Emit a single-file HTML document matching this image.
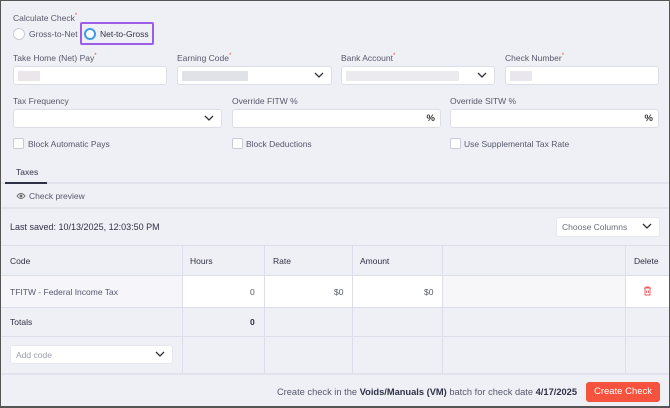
<!DOCTYPE html>
<html><head><meta charset="utf-8"><style>
*{box-sizing:border-box;margin:0;padding:0}
body{width:670px;height:408px;overflow:hidden;background:#555;font-family:"Liberation Sans",sans-serif;color:#3a3d4f;font-size:9px}
#w{position:absolute;left:1px;top:1px;width:668px;height:405px;background:#eff0f6;overflow:hidden}
.a{position:absolute}
.lbl{position:absolute;font-size:8.5px;color:#55586a;white-space:nowrap}
.req{color:#e04b4b;font-size:6px;vertical-align:top}
.in{position:absolute;background:#fff;border:1px solid #dcdde6;border-radius:3px;height:19px}
.chev{position:absolute;right:7px;top:4px;width:10px;height:8px}
.cb{position:absolute;width:11px;height:11px;border:1px solid #c9cbd6;border-radius:2px;background:#fff}
.ct{position:absolute;font-size:8.5px;color:#55586a;white-space:nowrap}
.blur{position:absolute;top:4px;height:10px}
.vl{position:absolute;width:1px;background:#dcdde8}
.hl{position:absolute;height:1px;background:#dcdde8;left:0;width:668px}
.th{position:absolute;font-size:8.5px;color:#2e3145;top:255px}
.pct{position:absolute;right:5px;top:3px;font-size:9.5px;font-weight:bold;color:#333}
</style></head><body><div id="w">
<div class="lbl" style="left:12px;top:12px">Calculate Check<span class="req">*</span></div>
<div class="a" style="left:12px;top:27px;width:12px;height:12px;border:1px solid #c9cbd6;border-radius:50%;background:#fff"></div>
<div class="ct" style="left:28px;top:28px">Gross-to-Net</div>
<div class="a" style="left:79px;top:21px;width:74px;height:23px;border:2px solid #9c5de8;border-radius:2px"></div>
<div class="a" style="left:83px;top:27px;width:12px;height:12px;border:2.5px solid #3d9be9;border-radius:50%;background:#fff"></div>
<div class="ct" style="left:99px;top:28px;color:#2e3145">Net-to-Gross</div>

<div class="lbl" style="left:12px;top:52px">Take Home (Net) Pay<span class="req">*</span></div>
<div class="lbl" style="left:176px;top:52px">Earning Code<span class="req">*</span></div>
<div class="lbl" style="left:340px;top:52px">Bank Account<span class="req">*</span></div>
<div class="lbl" style="left:504px;top:52px">Check Number<span class="req">*</span></div>
<div class="in" style="left:12px;top:65px;width:154px"><div class="blur" style="left:4px;width:22px;background:#ebe6ea"></div></div>
<div class="in" style="left:176px;top:65px;width:155px"><div class="blur" style="left:4px;width:66px;background:#e1e2e8"></div><svg class="chev" viewBox="0 0 10 8"><path d="M1 2l4 4 4-4" fill="none" stroke="#333" stroke-width="1.3"/></svg></div>
<div class="in" style="left:340px;top:65px;width:154px"><div class="blur" style="left:4px;width:113px;background:#ebebef"></div><svg class="chev" viewBox="0 0 10 8"><path d="M1 2l4 4 4-4" fill="none" stroke="#333" stroke-width="1.3"/></svg></div>
<div class="in" style="left:504px;top:65px;width:154px"><div class="blur" style="left:4px;width:22px;background:#e9e6ee"></div></div>

<div class="lbl" style="left:12px;top:95px">Tax Frequency</div>
<div class="lbl" style="left:231px;top:95px">Override FITW %</div>
<div class="lbl" style="left:449px;top:95px">Override SITW %</div>
<div class="in" style="left:12px;top:108px;width:209px"><svg class="chev" viewBox="0 0 10 8"><path d="M1 2l4 4 4-4" fill="none" stroke="#333" stroke-width="1.3"/></svg></div>
<div class="in" style="left:231px;top:108px;width:209px"><span class="pct">%</span></div>
<div class="in" style="left:449px;top:108px;width:209px"><span class="pct">%</span></div>

<div class="cb" style="left:12px;top:137px"></div><div class="ct" style="left:27px;top:138px">Block Automatic Pays</div>
<div class="cb" style="left:231px;top:137px"></div><div class="ct" style="left:245px;top:138px">Block Deductions</div>
<div class="cb" style="left:449px;top:137px"></div><div class="ct" style="left:463px;top:138px">Use Supplemental Tax Rate</div>

<div class="ct" style="left:15px;top:166px;color:#2e3145">Taxes</div>
<div class="hl" style="top:181px;height:2px;background:#e2e3ec"></div>
<div class="a" style="left:4px;top:181px;width:42px;height:2px;background:#2e3145"></div>
<svg class="a" style="left:15px;top:191px" width="10" height="8" viewBox="0 0 10 8"><path d="M1 4Q5 -1 9 4Q5 9 1 4Z" fill="none" stroke="#666" stroke-width="0.9"/><circle cx="5" cy="4" r="1.4" fill="#666"/></svg>
<div class="ct" style="left:28px;top:190px">Check preview</div>
<div class="hl" style="top:206px;height:2px;background:#e2e3ec"></div>

<div class="ct" style="left:9px;top:221px;color:#2e3145;font-size:9px">Last saved: 10/13/2025, 12:03:50 PM</div>
<div class="in" style="left:555px;top:216px;width:104px;height:20px;border-color:#e6e7ee"><span style="position:absolute;left:5px;top:4px;font-size:8.5px;color:#6a6d7e">Choose Columns</span><svg class="chev" viewBox="0 0 10 8"><path d="M1 2l4 4 4-4" fill="none" stroke="#333" stroke-width="1.3"/></svg></div>

<div class="hl" style="top:244px"></div>
<div class="a" style="left:0;top:275px;width:181px;height:31px;background:#f6f6fa"></div>
<div class="a" style="left:181px;top:275px;width:260px;height:31px;background:#fff"></div>
<div class="a" style="left:441px;top:275px;width:183px;height:31px;background:#f7f7fa"></div>
<div class="a" style="left:624px;top:275px;width:44px;height:31px;background:#fff"></div>
<div class="hl" style="top:274px"></div>
<div class="hl" style="top:306px"></div>
<div class="hl" style="top:335px"></div>
<div class="hl" style="top:372px;height:2px;background:#e2e3ec"></div>
<div class="vl" style="left:181px;top:244px;height:128px"></div>
<div class="vl" style="left:263px;top:244px;height:128px"></div>
<div class="vl" style="left:351px;top:244px;height:128px"></div>
<div class="vl" style="left:441px;top:244px;height:128px"></div>
<div class="vl" style="left:624px;top:244px;height:128px"></div>
<div class="th" style="left:9px">Code</div>
<div class="th" style="left:189px">Hours</div>
<div class="th" style="left:272px">Rate</div>
<div class="th" style="left:359px">Amount</div>
<div class="th" style="left:633px">Delete</div>
<div class="ct" style="left:9px;top:286px">TFITW - Federal Income Tax</div>
<div class="ct" style="left:249px;top:286px">0</div>
<div class="ct" style="left:333px;top:286px">$0</div>
<div class="ct" style="left:423px;top:286px">$0</div>
<svg class="a" style="left:642px;top:285px" width="9" height="10" viewBox="0 0 9 10"><path d="M1 2h7M3 2V1h3v1M2 2.5v6.5h5V2.5M3.5 4.5v2.5M5.5 4.5v2.5" fill="none" stroke="#e85a5a" stroke-width="0.9"/></svg>
<div class="th" style="left:9px;top:316px">Totals</div>
<div class="th" style="left:249px;top:316px;font-weight:bold">0</div>
<div class="in" style="left:9px;top:344px;width:163px;height:19px;border-color:#e6e7ee"><span style="position:absolute;left:5px;top:4px;font-size:8.5px;color:#9a9cab">Add code</span><svg class="chev" viewBox="0 0 10 8"><path d="M1 2l4 4 4-4" fill="none" stroke="#333" stroke-width="1.3"/></svg></div>

<div class="ct" style="right:92px;top:386px;color:#55586a;font-size:9.3px">Create check in the <b style="color:#2e3145">Voids/Manuals (VM)</b> batch for check date <b style="color:#2e3145">4/17/2025</b></div>
<div class="a" style="left:585px;top:381px;width:74px;height:20px;background:#f5533d;border-radius:3px;color:#fff;font-size:9.5px;text-align:center;line-height:20px">Create Check</div>
</div></body></html>
